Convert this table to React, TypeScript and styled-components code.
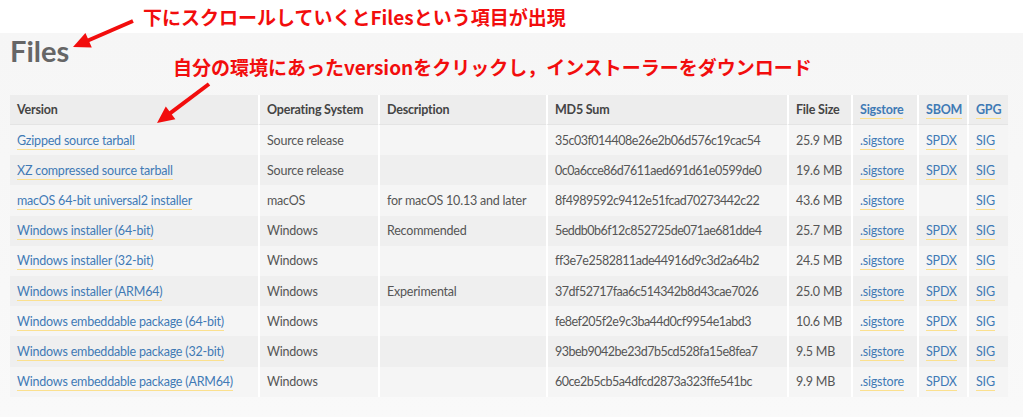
import styled, { createGlobalStyle } from "styled-components"

const GlobalStyle = createGlobalStyle`
  html, body {
    margin: 0;
    padding: 0;
    background: #ffffff;
  }
  body {
    font-family: Lato, "Noto Sans", sans-serif;
  }
`

const Page = styled.div`
  position: relative;
  width: 1023px;
  height: 417px;
  overflow: hidden;
`

const TopBand = styled.div`
  height: 33px;
  background: #ffffff;
  padding-left: 143px;
  box-sizing: border-box;
`

const Note = styled.div`
  font-family: "Noto Sans CJK JP", "Noto Sans", sans-serif;
  font-weight: 700;
  font-size: 19px;
  color: #f20d0d;
  line-height: 1;
  white-space: nowrap;
`

const TopNote = styled(Note)`
  padding-top: 7px;
`

const OverNote = styled(Note)`
  position: absolute;
  left: 173px;
  top: 57px;
`

const Section = styled.section`
  background: linear-gradient(#f6f6f6, #f9f9f9);
  height: 384px;
  padding: 0 15px 0 10px;
  box-sizing: border-box;
`

const Heading = styled.h2`
  margin: 0;
  height: 62px;
  font-family: Lato, sans-serif;
  font-weight: 700;
  font-size: 29px;
  line-height: 36px;
  color: #666666;
`

const Table = styled.table`
  width: 998px;
  table-layout: fixed;
  border-collapse: separate;
  border-spacing: 0;
  font-family: Lato, sans-serif;
  font-size: 12.5px;
  letter-spacing: -0.2px;
  color: #555555;
`

const Th = styled.th<{ $w: number }>`
  width: ${(p) => p.$w}px;
  height: 30px;
  padding: 0 7px;
  text-align: left;
  font-weight: 700;
  color: #444444;
  background: #ededed;
  border-bottom: 1px solid #e4e4e4;
  box-sizing: border-box;
  white-space: nowrap;
  & + & {
    border-left: 2px solid #ffffff;
  }
`

const Row = styled.tr<{ $alt: boolean }>`
  background: ${(p) => (p.$alt ? "#efefef" : "#f5f5f5")};
`

const Td = styled.td<{ $tight?: boolean }>`
  height: 30.2px;
  padding: 0 7px;
  box-sizing: border-box;
  white-space: nowrap;
  overflow: hidden;
  letter-spacing: ${(p) => (p.$tight ? "-0.5px" : "inherit")};
  & + & {
    border-left: 2px solid #ffffff;
  }
`

const Link = styled.a`
  color: #3f7ab5;
  text-decoration: none;
  border-bottom: 1px solid #fbe08e;
  padding-bottom: 1px;
`

const Overlay = styled.svg`
  position: absolute;
  left: 0;
  top: 0;
  pointer-events: none;
`

type Arrow = { x1: number; y1: number; x2: number; y2: number }

const arrows: Arrow[] = [
  { x1: 133, y1: 21, x2: 73, y2: 47 },
  { x1: 209, y1: 84, x2: 157, y2: 123 },
]

function head(a: Arrow) {
  const dx = a.x2 - a.x1
  const dy = a.y2 - a.y1
  const len = Math.hypot(dx, dy)
  const ux = dx / len
  const uy = dy / len
  const bx = a.x2 - ux * 17
  const by = a.y2 - uy * 17
  const px = -uy * 8
  const py = ux * 8
  return `${a.x2},${a.y2} ${bx + px},${by + py} ${bx - px},${by - py}`
}

const cols = [
  { label: "Version", w: 248 },
  { label: "Operating System", w: 120 },
  { label: "Description", w: 168 },
  { label: "MD5 Sum", w: 241 },
  { label: "File Size", w: 64 },
  { label: "Sigstore", w: 66, link: true },
  { label: "SBOM", w: 50, link: true },
  { label: "GPG", w: 41, link: true },
]

const files = [
  ["Gzipped source tarball", "Source release", "", "35c03f014408e26e2b06d576c19cac54", "25.9 MB", true],
  ["XZ compressed source tarball", "Source release", "", "0c0a6cce86d7611aed691d61e0599de0", "19.6 MB", true],
  ["macOS 64-bit universal2 installer", "macOS", "for macOS 10.13 and later", "8f4989592c9412e51fcad70273442c22", "43.6 MB", false],
  ["Windows installer (64-bit)", "Windows", "Recommended", "5eddb0b6f12c852725de071ae681dde4", "25.7 MB", true],
  ["Windows installer (32-bit)", "Windows", "", "ff3e7e2582811ade44916d9c3d2a64b2", "24.5 MB", true],
  ["Windows installer (ARM64)", "Windows", "Experimental", "37df52717faa6c514342b8d43cae7026", "25.0 MB", true],
  ["Windows embeddable package (64-bit)", "Windows", "", "fe8ef205f2e9c3ba44d0cf9954e1abd3", "10.6 MB", true],
  ["Windows embeddable package (32-bit)", "Windows", "", "93beb9042be23d7b5cd528fa15e8fea7", "9.5 MB", true],
  ["Windows embeddable package (ARM64)", "Windows", "", "60ce2b5cb5a4dfcd2873a323ffe541bc", "9.9 MB", true],
] as const

export default function App() {
  return (
    <Page>
      <GlobalStyle />
      <TopBand>
        <TopNote>下にスクロールしていくとFilesという項目が出現</TopNote>
      </TopBand>
      <Section>
        <Heading>Files</Heading>
        <Table>
          <thead>
            <tr>
              {cols.map((c) => (
                <Th key={c.label} $w={c.w}>
                  {c.link ? <Link href="#">{c.label}</Link> : c.label}
                </Th>
              ))}
            </tr>
          </thead>
          <tbody>
            {files.map(([name, os, desc, md5, size, sbom], i) => (
              <Row key={name} $alt={i % 2 === 1}>
                <Td>
                  <Link href="#">{name}</Link>
                </Td>
                <Td>{os}</Td>
                <Td>{desc}</Td>
                <Td $tight>{md5}</Td>
                <Td>{size}</Td>
                <Td>
                  <Link href="#">.sigstore</Link>
                </Td>
                <Td>{sbom && <Link href="#">SPDX</Link>}</Td>
                <Td>
                  <Link href="#">SIG</Link>
                </Td>
              </Row>
            ))}
          </tbody>
        </Table>
      </Section>
      <OverNote>自分の環境にあったversionをクリックし，インストーラーをダウンロード</OverNote>
      <Overlay width={1023} height={417}>
        {arrows.map((a, i) => {
          const dx = a.x2 - a.x1
          const dy = a.y2 - a.y1
          const len = Math.hypot(dx, dy)
          return (
            <g key={i} fill="#f20d0d" stroke="#f20d0d">
              <line
                x1={a.x1}
                y1={a.y1}
                x2={a.x2 - (dx / len) * 12}
                y2={a.y2 - (dy / len) * 12}
                strokeWidth={4}
              />
              <polygon points={head(a)} stroke="none" />
            </g>
          )
        })}
      </Overlay>
    </Page>
  )
}
